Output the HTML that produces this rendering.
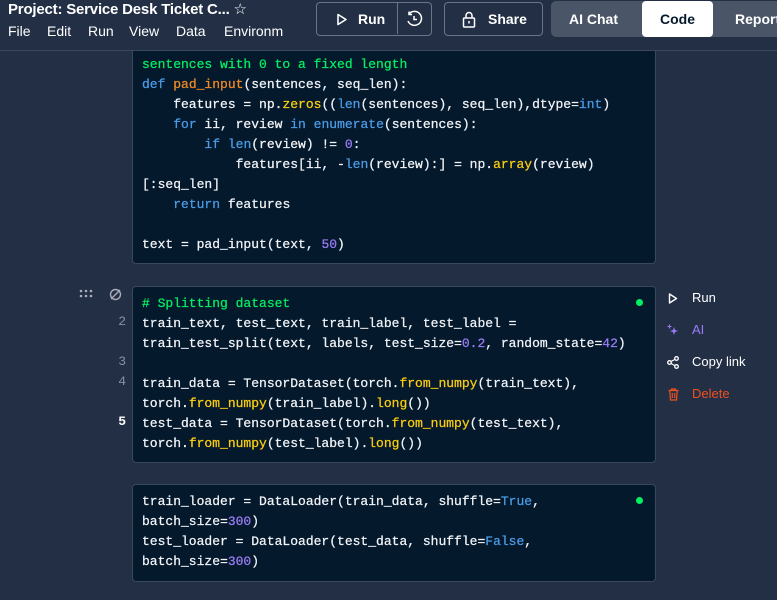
<!DOCTYPE html>
<html><head><meta charset="utf-8"><style>
*{margin:0;padding:0;box-sizing:border-box}
body{width:777px;height:600px;overflow:hidden;background:#222f45;font-family:"Liberation Sans",sans-serif;position:relative;color:#fff}
.hdr{position:absolute;left:0;top:0;width:777px;height:51px;background:#222f45;border-bottom:1px solid #3b475b;z-index:5}
.title{position:absolute;left:8px;top:0px;font-size:15px;font-weight:bold;color:#fff;white-space:nowrap;letter-spacing:-0.2px}
.menu{position:absolute;left:8px;top:23px;height:20px;font-size:14px;color:#fff;white-space:nowrap;width:275px;overflow:hidden}
.menu span{position:absolute;top:0}
.btn{position:absolute;top:2px;height:34px;border:1.5px solid #6b7587;border-radius:4px;font-size:14px;font-weight:bold;display:flex;align-items:center}
.tabs{position:absolute;left:551px;top:1px;width:240px;height:36px;background:#4a5568;border-radius:5px;font-size:14px;font-weight:bold}
.tabs div{position:absolute;top:0;height:36px;line-height:36px}
.cell{position:absolute;left:132px;width:524px;background:#05192d;border:1px solid #3b475b;border-radius:4px}
pre{font-family:"Liberation Mono",monospace;font-size:13px;line-height:20px;color:#f2f4f7;position:absolute;left:9px;-webkit-text-stroke:0.25px currentColor}
.c{color:#03ef62}.k{color:#4a9de8}.f{color:#f08a24}.y{color:#fcce0d}.n{color:#9a7df5}
.ln{position:absolute;left:100px;width:26px;text-align:right;font-family:"Liberation Mono",monospace;font-size:13px;color:#8891a0}
.act{position:absolute;left:692px;font-size:13px;color:#fff}
.dot{position:absolute;width:7px;height:7px;border-radius:50%;background:#03ef62}
</style></head><body>
<div class="cell" style="top:20px;height:244px">
<pre style="top:34px"><span class="c">sentences with 0 to a fixed length</span>
<span class="k">def</span> <span class="f">pad_input</span>(sentences, seq_len):
    features = np.<span class="y">zeros</span>((<span class="k">len</span>(sentences), seq_len),dtype=<span class="k">int</span>)
    <span class="k">for</span> ii, review <span class="k">in</span> <span class="k">enumerate</span>(sentences):
        <span class="k">if</span> <span class="k">len</span>(review) != <span class="n">0</span>:
            features[ii, -<span class="k">len</span>(review):] = np.<span class="y">array</span>(review)
[:seq_len]
    <span class="k">return</span> features

text = pad_input(text, <span class="n">50</span>)</pre></div>

<div class="hdr">
<div class="title">Project: Service Desk Ticket C... <span style="font-weight:normal">☆</span></div>
<div class="menu"><span style="left:0">File</span><span style="left:39px">Edit</span><span style="left:80px">Run</span><span style="left:121px">View</span><span style="left:168px">Data</span><span style="left:216px">Environment</span></div>
<div class="btn" style="left:316px;width:116px"><svg style="margin-left:19px" width="12" height="13" viewBox="0 0 12 13"><path d="M2 1.5 L10 6.5 L2 11.5Z" fill="none" stroke="#fff" stroke-width="1.6" stroke-linejoin="round"/></svg><span style="margin-left:10px">Run</span><div style="position:absolute;left:80px;top:0;height:31px;border-left:1.5px solid #6b7587"></div><svg style="position:absolute;left:88px;top:7px" width="18" height="18" viewBox="0 0 18 18"><path d="M4 4 A7 7 0 1 1 3 11" fill="none" stroke="#fff" stroke-width="1.5"/><path d="M4 1.5 V4.5 H7" fill="none" stroke="#fff" stroke-width="1.5"/><path d="M9 6 V9.5 H12" fill="none" stroke="#fff" stroke-width="1.5"/></svg></div>
<div class="btn" style="left:444px;width:99px"><svg style="margin-left:17px" width="14" height="17" viewBox="0 0 14 17"><rect x="1.5" y="7" width="11" height="9" rx="1" fill="none" stroke="#fff" stroke-width="1.5"/><path d="M4 7 V4.5 A3 3 0 0 1 10 4.5 V7" fill="none" stroke="#fff" stroke-width="1.5"/><path d="M7 10 V12.5" stroke="#fff" stroke-width="1.5"/></svg><span style="margin-left:12px">Share</span></div>
<div class="tabs"><div style="left:18px">AI Chat</div><div style="left:91px;width:71px;background:#fff;color:#05192d;text-align:center;border-radius:4px">Code</div><div style="left:184px">Report</div></div>
</div>

<svg style="position:absolute;left:79px;top:289px" width="14" height="10"><g fill="#aab"><circle cx="2" cy="2" r="1.3"/><circle cx="7" cy="2" r="1.3"/><circle cx="12" cy="2" r="1.3"/><circle cx="2" cy="7" r="1.3"/><circle cx="7" cy="7" r="1.3"/><circle cx="12" cy="7" r="1.3"/></g></svg>
<svg style="position:absolute;left:109px;top:288px" width="13" height="13"><circle cx="6.5" cy="6.5" r="5" fill="none" stroke="#aab" stroke-width="1.4"/><path d="M2 11 L11 2" stroke="#aab" stroke-width="1.4"/></svg>
<div class="ln" style="top:314px">2</div>
<div class="ln" style="top:354px">3</div>
<div class="ln" style="top:374px">4</div>
<div class="ln" style="top:414px;color:#fff;font-weight:bold">5</div>

<div class="cell" style="top:286px;height:177px">
<div class="dot" style="left:503px;top:12px"></div>
<pre style="top:7px"><span class="c"># Splitting dataset</span>
train_text, test_text, train_label, test_label =
train_test_split(text, labels, test_size=<span class="n">0.2</span>, random_state=<span class="n">42</span>)

train_data = TensorDataset(torch.<span class="y">from_numpy</span>(train_text),
torch.<span class="y">from_numpy</span>(train_label).<span class="y">long</span>())
test_data = TensorDataset(torch.<span class="y">from_numpy</span>(test_text),
torch.<span class="y">from_numpy</span>(test_label).<span class="y">long</span>())</pre></div>

<svg style="position:absolute;left:668px;top:293px" width="10" height="11"><path d="M1.5 1 L8.5 5.5 L1.5 10Z" fill="none" stroke="#fff" stroke-width="1.4" stroke-linejoin="round"/></svg>
<div class="act" style="top:290px">Run</div>
<svg style="position:absolute;left:667px;top:324px" width="13" height="13"><path d="M7 3 L8 6 L11 7 L8 8 L7 11 L6 8 L3 7 L6 6Z" fill="#9a7df5"/><path d="M2.5 0.5 V4.5 M0.5 2.5 H4.5" stroke="#9a7df5" stroke-width="1.1"/></svg>
<div class="act" style="top:322px;color:#9a7df5">AI</div>
<svg style="position:absolute;left:667px;top:356px" width="12" height="13"><circle cx="9.5" cy="2.5" r="1.8" fill="none" stroke="#fff" stroke-width="1.3"/><circle cx="2.5" cy="6.5" r="1.8" fill="none" stroke="#fff" stroke-width="1.3"/><circle cx="9.5" cy="10.5" r="1.8" fill="none" stroke="#fff" stroke-width="1.3"/><path d="M4 5.5 L8 3.4 M4 7.5 L8 9.6" stroke="#fff" stroke-width="1.2"/></svg>
<div class="act" style="top:354px">Copy link</div>
<svg style="position:absolute;left:668px;top:388px" width="11" height="13"><path d="M0.5 2.5 H10.5 M3.5 2.5 V1 H7.5 V2.5 M1.8 2.5 L2.5 12 H8.5 L9.2 2.5 M4.3 5 V10 M6.7 5 V10" fill="none" stroke="#f0501e" stroke-width="1.2"/></svg>
<div class="act" style="top:386px;color:#f0501e">Delete</div>

<div class="cell" style="top:484px;height:98px">
<div class="dot" style="left:503px;top:12px"></div>
<pre style="top:7px">train_loader = DataLoader(train_data, shuffle=<span class="k">True</span>,
batch_size=<span class="n">300</span>)
test_loader = DataLoader(test_data, shuffle=<span class="k">False</span>,
batch_size=<span class="n">300</span>)</pre></div>
</body></html>
